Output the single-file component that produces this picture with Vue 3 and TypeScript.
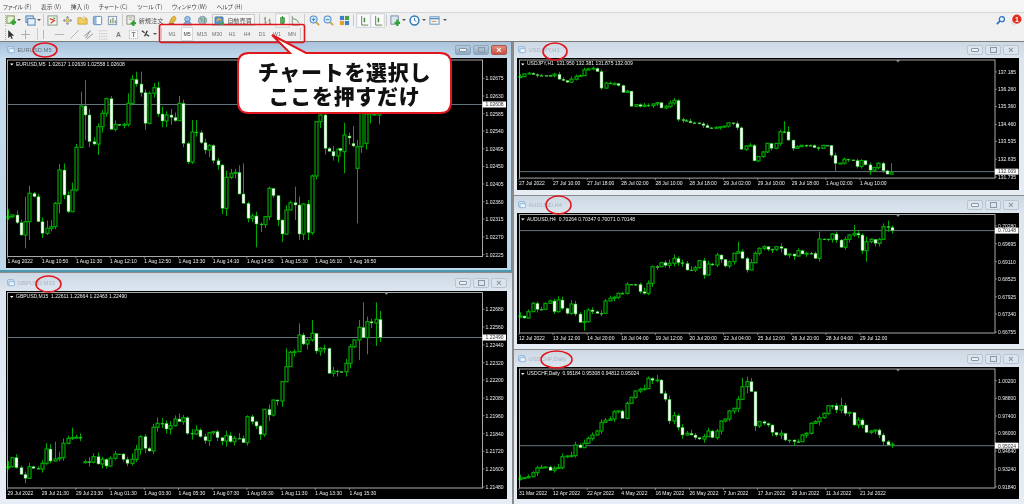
<template>
  <div class="terminal">
    <!-- menu -->
    <div class="menubar">
      <span v-for="m in menus" :key="m">{{ m }}</span>
    </div>

    <!-- toolbars -->
    <div v-for="(row, r) in toolbars" :key="r" class="toolbar">
      <template v-for="(c, n) in row" :key="n">
        <span v-if="c.i === 'spacer'" class="spacer"></span>
        <span v-else-if="c.i === 'grip'" class="cell grip" :style="{ width: c.w + 'px' }"></span>
        <span v-else-if="c.i === 'sep'" class="cell" :style="{ width: c.w + 'px' }"><i class="sep"></i></span>
        <span v-else-if="c.i === 'drop'" class="cell" :style="{ width: c.w + 'px' }"><i class="drop"></i></span>
        <span v-else-if="c.tf" class="cell tf" :class="{ on: c.on }" :style="{ width: c.w + 'px' }"><b>{{ c.tf }}</b></span>
        <span v-else class="cell" :class="{ on: c.on, auto: c.i === 'auto' }" :style="{ width: c.w + 'px' }">
          <svg class="ico" viewBox="0 0 12 12" v-html="icons[c.i]"></svg>
          <em v-if="c.text">{{ c.text }}</em>
        </span>
      </template>
    </div>

    <!-- chart windows -->
    <div class="mdi">
      <div v-for="(col, ci) in columns" :key="ci" class="col" :class="ci === 0 ? 'col-left' : 'col-right'">
        <section v-for="w in col" :key="w.title" class="win" :class="[w.cls, { active: w.active }]">
          <header class="title">
            <svg class="win-ico" viewBox="0 0 12 12">
              <rect x="1" y="1" width="9" height="8" rx="1" fill="#d8e8f6" stroke="#6f9fd0" />
              <rect x="3" y="4" width="8" height="6" rx="1" fill="#eef5fb" stroke="#6f9fd0" />
            </svg>
            <span class="name">{{ w.title }}</span>
            <span class="btns">
              <i class="btn"><u class="min"></u></i>
              <i class="btn"><u class="res"></u></i>
              <i class="btn close"><u class="x">×</u></i>
            </span>
          </header>
          <div class="chart">
            <svg :viewBox="w.vb.join(' ')" preserveAspectRatio="none">
              <line :x1="w.frame[0]" :x2="w.frame[2]" :y1="w.last[1]" :y2="w.last[1]" class="cur" />
              <g v-for="(c, k) in w.candles" :key="k">
                <line :x1="c.x" :x2="c.x" :y1="c.hi" :y2="c.lo" class="wick" />
                <rect :x="c.x - 1.5" :y="c.top" width="3" :height="c.h" :class="c.up ? 'up' : 'down'" />
              </g>
              <rect
                :x="w.frame[0]"
                :y="w.frame[1]"
                :width="w.frame[2] - w.frame[0]"
                :height="w.frame[3] - w.frame[1]"
                class="frame"
              />
              <polygon :points="`${w.mark - 2},${w.frame[1]} ${w.mark + 2},${w.frame[1]} ${w.mark},${w.frame[1] + 2.5}`" fill="#8a97a3" />
              <polygon :points="`${w.head[0] - 6},${w.head[1] - 2} ${w.head[0] - 2.5},${w.head[1] - 2} ${w.head[0] - 4.2},${w.head[1]}`" fill="#fff" />
              <text :x="w.head[0]" :y="w.head[1]" class="lbl">{{ w.info }}</text>
              <g v-for="p in w.prices" :key="p[0]">
                <line :x1="w.frame[2]" :x2="w.frame[2] + 2" :y1="p[1]" :y2="p[1]" class="tick" />
                <text :x="w.frame[2] + 3" :y="Number(p[1]) + 1.8" class="lbl">{{ p[0] }}</text>
              </g>
              <g v-for="t in w.times" :key="t[0]">
                <line :x1="t[1]" :x2="t[1]" :y1="w.frame[3]" :y2="w.frame[3] + 2" class="tick" />
                <text :x="t[1]" :y="w.frame[3] + 6.8" class="lbl">{{ t[0] }}</text>
              </g>
              <rect :x="w.frame[2]" :y="Number(w.last[1]) - 3" width="23.5" height="6" fill="#fff" />
              <text :x="w.frame[2] + 3" :y="Number(w.last[1]) + 1.8" class="lbl dark">{{ w.last[0] }}</text>
            </svg>
          </div>
        </section>
      </div>
    </div>

    <!-- annotations drawn over the screenshot -->
    <svg class="notes" viewBox="0 0 1024 504">
      <rect x="159.5" y="24.5" width="145" height="18" rx="2" class="mark" />
      <ellipse cx="45" cy="50" rx="12" ry="7" class="mark" />
      <ellipse cx="48.5" cy="284" rx="12.5" ry="8" class="mark" />
      <ellipse cx="555" cy="51.5" rx="12" ry="8.5" class="mark" />
      <ellipse cx="558.5" cy="205" rx="12.5" ry="9" class="mark" />
      <ellipse cx="556.5" cy="359.5" rx="15.5" ry="8.5" class="mark" />
      <path
        d="M249 53 H290 L272 35 L306 53 H440 Q451 53 451 64 V102 Q451 113 440 113 H249 Q238 113 238 102 V64 Q238 53 249 53 Z"
        class="bubble"
      />
    </svg>
    <div class="say">チャートを選択し<br />ここを押すだけ</div>
  </div>
</template>

<script setup lang="ts">
type Body = number | [number, number]
type Seg = { x0: number; ox: number; oy: number; v: Body[]; w?: Record<number, [number, number]>; gap?: boolean }
type Tool = { i: string; w: number; on?: boolean; text?: string; tf?: string }

const menus = ['ファイル (F)', '表示 (V)', '挿入 (I)', 'チャート (C)', 'ツール (T)', 'ウィンドウ (W)', 'ヘルプ (H)']

const icons: Record<string, string> = {
  newchart: '<rect x="1" y="1" width="8" height="8" fill="#e8f0d8" stroke="#6f8f50"/><path d="M8 5v6M5 8h6" stroke="#2fa52f" stroke-width="2.4"/>',
  profile: '<rect x="1" y="1" width="8" height="7" fill="#cfe0f2" stroke="#4a78ad"/><rect x="3" y="4" width="8" height="7" fill="#e6f0fa" stroke="#4a78ad"/>',
  watch: '<rect x="1" y="1" width="10" height="10" fill="#f6f6f2" stroke="#7c9a7c"/><path d="M3 4l5 2-4 3" stroke="#d2452e" stroke-width="1.4" fill="none"/><path d="M7 3l2 1" stroke="#3ca03c" stroke-width="1.4"/>',
  nav: '<path d="M6 1l2 2H4zM6 11l2-2H4zM1 6l2-2v4zM11 6L9 4v4z" fill="#76808a"/><circle cx="6" cy="6" r="2.2" fill="#e9c85a" stroke="#8d8d8d" stroke-width=".6"/>',
  folder: '<path d="M1 3h4l1 1h5v6H1z" fill="#f3cf62" stroke="#b48e28" stroke-width=".7"/><path d="M7 1l1.2 1.6L10 3 8.6 4.2 9 6 7 5 5.5 6" fill="#f6dd8a" stroke="#c5a23a" stroke-width=".5"/>',
  term: '<rect x="1.5" y="1.5" width="9" height="9" rx="1" fill="#fff" stroke="#4f7fb5"/><rect x="2" y="2" width="3" height="8" fill="#8db5dc"/>',
  tester: '<rect x="1.5" y="1.5" width="9" height="9" fill="#eef2f6" stroke="#7e97ad"/><path d="M4 9V5M6.5 9V3M9 9V6" stroke="#7d8a5c" stroke-width="1.2"/>',
  order: '<rect x="1" y="1" width="8" height="9" fill="#f4f4ee" stroke="#8a8a80"/><path d="M3 3h4M3 5h4" stroke="#999" stroke-width=".8"/><path d="M8 6v6M5 9h6" stroke="#22a52a" stroke-width="2.2"/>',
  editor: '<path d="M2 10L5 3l3-2 2 3-2 3z" fill="#e7b93e" stroke="#a67e1e" stroke-width=".7"/><path d="M2 10l6-1" stroke="#7c5e18"/>',
  mail: '<circle cx="6" cy="4.5" r="3" fill="#9dc4ea" stroke="#3f76b0" stroke-width=".8"/><path d="M1.5 11c.5-3 2.5-4 4.500-4s4 1 4.500 4z" fill="#7fa9d6" stroke="#3f76b0" stroke-width=".6"/>',
  net: '<circle cx="6" cy="6" r="4.600" fill="#a8bdcf" stroke="#6d8397" stroke-width=".7"/><path d="M3 4c2-1 3 1 2 3M8 3c1 2 0 5-1 6" stroke="#5aa05a" stroke-width="1.100" fill="none"/>',
  auto: '<rect x="1" y="2" width="9" height="8" rx="1" fill="#5b93c8" stroke="#355f8e" stroke-width=".6"/><path d="M3 7l2-3 3 2" stroke="#f0b93c" stroke-width="1.600" fill="none"/><circle cx="9" cy="9" r="2" fill="#4aa84a"/>',
  bars: '<path d="M3.500 2v8M2 4h1.500M3.500 8H5M8.500 4v7M7 6h1.500M8.500 9H10" stroke="#6a7a58" stroke-width=".9"/>',
  candle: '<path d="M6 1v10" stroke="#2e8b2e"/><rect x="4" y="3" width="4" height="6" fill="#4cb04c" stroke="#1f6f1f" stroke-width=".6"/>',
  linec: '<path d="M2.500 1v10h8" stroke="#7c8a70" fill="none"/><path d="M3 4l4 1 3 4" stroke="#5d8f5d" fill="none"/>',
  zin: '<circle cx="5" cy="5" r="3.800" fill="#d9ecfa" stroke="#4c8fc6" stroke-width="1.100"/><path d="M8 8l3 3" stroke="#d0a035" stroke-width="1.800"/><path d="M3 5h4M5 3v4" stroke="#3d7db3"/>',
  zout: '<circle cx="5" cy="5" r="3.800" fill="#d9ecfa" stroke="#4c8fc6" stroke-width="1.100"/><path d="M8 8l3 3" stroke="#d0a035" stroke-width="1.800"/><path d="M3 5h4" stroke="#3d7db3"/>',
  tile: '<rect x="1" y="1" width="4.500" height="4.500" fill="#3d7fc0"/><rect x="6.500" y="1" width="4.500" height="4.500" fill="#4aa04a"/><rect x="1" y="6.500" width="4.500" height="4.500" fill="#e0a030"/><rect x="6.500" y="6.500" width="4.500" height="4.500" fill="#3d7fc0"/>',
  shift: '<path d="M4 1v10h7" stroke="#5e7a4e" fill="none"/><path d="M7 3v5" stroke="#3e8e3e" stroke-width="1.600"/>',
  indic: '<rect x="1" y="1" width="8" height="9" fill="#dde7ef" stroke="#6f8aa3"/><path d="M8 5v7M5 8.500h6" stroke="#2fa52f" stroke-width="2.400"/>',
  clock: '<circle cx="6" cy="6" r="4.800" fill="#fff" stroke="#2f78b8" stroke-width="1.600"/><path d="M6 3v3l2 1" stroke="#2f78b8" fill="none"/>',
  tpl: '<rect x="1" y="2" width="10" height="8" fill="#eef4fa" stroke="#5d8fbd"/><path d="M1 4h10" stroke="#5d8fbd" stroke-width="1.400"/><path d="M3 7h5" stroke="#e09030"/>',
  cursor: '<path d="M3.500 1v9l2.200-2 1.500 3 1.300-.6-1.500-3h3z" fill="#333"/>',
  cross: '<path d="M6 1v10M1 6h10" stroke="#a4a8ac"/>',
  vline: '<path d="M6 1v10" stroke="#b0b0b0"/>',
  hline: '<path d="M1 6h10" stroke="#b0b0b0"/>',
  trend: '<path d="M1.500 10.500l9-9" stroke="#b0b0b0"/>',
  chan: '<path d="M1 8l7-6M4 11l7-6M3 10l5-8" stroke="#8f8f8f"/>',
  fib: '<path d="M1 2h10M1 5h10M1 8h10M1 11h10" stroke="#b4b4b4" stroke-dasharray="1 1"/>',
  letter: '<text x="6" y="9" text-anchor="middle" font-family="Liberation Sans" font-size="7.500" font-weight="700" fill="#777">A</text>',
  tbox: '<rect x="1.500" y="1.500" width="9" height="9" fill="#fafafa" stroke="#aaa" stroke-dasharray="1 1"/><text x="6" y="9" text-anchor="middle" font-family="Liberation Sans" font-size="7.500" font-weight="700" fill="#777">T</text>',
  tool: '<path d="M2 2l3 2M7 6l3 2M8 2l-3 6" stroke="#333" stroke-width="1.400"/>',
  search: '<circle cx="7.500" cy="4.500" r="2.800" fill="#e8f2fb" stroke="#2f6fc0" stroke-width="1.300"/><path d="M5.500 6.500L2 10" stroke="#2f6fc0" stroke-width="1.800"/>',
  bell: '<path d="M1 8c0-2 2-3 4-3s4 1 4 3-2 3-4 3l-3 1 1-2C2 10 1 9 1 8z" fill="#dedede"/><circle cx="7.500" cy="4.500" r="5" fill="#e22a1f"/><text x="7.500" y="7.200" text-anchor="middle" font-family="Liberation Sans" font-size="7.500" font-weight="700" fill="#fff">1</text>'
}

const t = (i: string, w: number, extra: Partial<Tool> = {}): Tool => ({ i, w, ...extra })

const frames = ['M1', 'M5', 'M15', 'M30', 'H1', 'H4', 'D1', 'W1', 'MN']

const toolbars: Tool[][] = [
  [
    t('grip', 4), t('newchart', 8), t('drop', 8), t('profile', 14), t('drop', 4), t('sep', 4),
    t('watch', 14), t('nav', 16), t('folder', 15), t('term', 15), t('tester', 15), t('sep', 4),
    t('order', 41, { text: '新規注文' }), t('editor', 15), t('mail', 15), t('net', 15),
    t('auto', 46, { text: '自動売買' }), t('sep', 6), t('bars', 10), t('candle', 20, { on: true }),
    t('linec', 7), t('sep', 10), t('zin', 10), t('zout', 18), t('tile', 14), t('sep', 4),
    t('shift', 16, { on: true }), t('shift', 12, { on: true }), t('sep', 6), t('indic', 12), t('drop', 6),
    t('clock', 15), t('drop', 4), t('tpl', 16), t('drop', 6), t('spacer', 0), t('search', 14), t('bell', 17)
  ],
  [
    t('grip', 4), t('cursor', 7), t('cross', 22), t('sep', 2), t('vline', 10), t('hline', 22), t('trend', 8),
    t('chan', 20), t('fib', 10), t('letter', 20), t('tbox', 10), t('tool', 14), t('drop', 6), t('sep', 6.5),
    ...frames.map((f) => t('tf', 15, { tf: f, on: f === 'M5' })),
    t('sep', 2)
  ]
]

const rnd = (n: number) => {
  const s = Math.sin(n * 12.9898) * 43758.5453
  return s - Math.floor(s)
}

// values are read from 3x crops, so each segment says where its crop began
const candles = (segs: Seg[], wk: number) => {
  const out: { x: number; hi: number; lo: number; top: number; h: number; up: boolean }[] = []
  let prev: number | null = null
  let n = 0
  segs.forEach((s) => {
    if (s.gap) prev = null
    s.v.forEach((b, i) => {
      const open = Array.isArray(b) ? s.oy + b[0] / 3 : prev ?? s.oy + b / 3 + 1
      const close = Array.isArray(b) ? s.oy + b[1] / 3 : s.oy + b / 3
      const top = Math.min(open, close)
      const bot = Math.max(open, close)
      const long = s.w?.[i]
      n++
      out.push({
        x: Math.round(s.ox + (s.x0 + i * 12.84) / 3) + 0.5,
        hi: long ? s.oy + long[0] / 3 : top - rnd(n) * wk,
        lo: long ? s.oy + long[1] / 3 : bot + rnd(n + 57) * wk,
        top,
        h: Math.max(bot - top, 0.8),
        up: close < open
      })
      prev = close
    })
  })
  return out
}

const eur: Seg[] = [
  {
    x0: 24, ox: 0, oy: 40,
    v: [530, 525, 548, 585, 545, 460, 470, 545, 580, 565, 560, 490, 390, 465, 515, 450, 322, 198, 225, 305, 312, 260, 220, 176, 268, 253, 256, 253, 190, 118, 132, 158, 250, 160, 143, 222, 243, 225, 232, 242, 190, 310, 366, 276, 278, 308, 330, 316, 362, 375, 505, 412, 400, 397, 462, 490, 535, 528, 552, 554, 530, 445, 467, 540, 582, 510, 488, 495, 582, 492, 578, 408, 245, 225, 325, 334, 348, 328],
    w: { 4: [470, 625], 5: [437, 600], 12: [372, 520], 17: [155, 322], 18: [120, 300], 21: [250, 345], 28: [160, 260], 29: [105, 195], 30: [95, 140], 31: [95, 170], 35: [125, 230], 43: [240, 372], 44: [240, 290], 58: [515, 622], 55: [370, 470], 61: [440, 540], 67: [440, 540], 68: [470, 600], 69: [490, 600] }
  },
  {
    x0: 0, ox: 340, oy: 40, gap: true,
    v: [[325, 332], [335, 285], [288, 294], [310, 318], [385, 320], [320, 200], [310, 222], [222, 215], [225, 222], [225, 215]],
    w: { 1: [248, 400], 3: [258, 322], 4: [300, 550], 9: [200, 253], 7: [200, 250] }
  }
]

const jpy: Seg[] = [
  {
    x0: 540, ox: 340, oy: 40,
    v: [110, 102, 100, 104, 107, 107, 107, 108, 103, 118, 122, 127, 118, 110, 107, 90, 87, 85, 95, 145, 130, 132, 131, 137, 158, 154, 200, 195, 200, 197, 198, 193, 189, 205, 200, 190, 182, 240, 243]
  },
  {
    x0: 5, ox: 684, oy: 0,
    v: [365, 370, 370, 373, 378, 385, 385, 384, 382, 380, 370, 372, 385, 450, 440, 438, 485, 472, 458, 432, 447, 432, 397, 397, 422, 447, 442, 438, 438, 438, 445, 447, 438, 438, 468, 493, 492, 480, 482, 484, 502, 484, 497, 513, 505, 492, 515, 525, 519],
    w: { 23: [365, 400], 24: [380, 425], 48: [492, 525], 35: [460, 517], 43: [490, 528] }
  }
]

const aud: Seg[] = [
  {
    x0: 29, ox: 510, oy: 190,
    v: [378, 384, 365, 340, 358, 358, 340, 333, 365, 330, 355, 370, 342, 372, 397, 395, 360, 365, 370, 370, 333, 325, 322, 310, 310, 283, 283, 283, 305, 310, 280, 230, 230, 218, 226, 220, 205, 218, 220, 240, 240, 233, 212, 255, 222, 225, 195, 208, 228, 215, 190, 185, 205, 240, 218, 190, 175, 170, 178, 178, 170, 175, 195, 192, 198, 182, 192, 190, 190, 205, 147, 147, 148, 132, 150, 172, 148, 135, 130, 135, 182, 155, 148, 160, 148, 110, 112, 122],
    w: { 15: [360, 422], 51: [155, 190], 70: [125, 215], 81: [140, 215], 85: [100, 150], 78: [105, 140], 86: [92, 125] }
  }
]

const chf: Seg[] = [
  {
    x0: 29, ox: 510, oy: 345,
    v: [400, 398, 395, 383, 368, 367, 366, 376, 370, 368, 335, 333, 332, 300, 308, 295, 280, 270, 258, 232, 226, 222, 200, 198, 220, 175, 157, 138, 133, 131, 100, 106, 105, 145, 163, 228, 212, 247, 270, 265, 270, 278, 282, 275, 258, 278, 258, 228, 222, 198, 190, 163, 125, 110, 140, 243, 230, 235, 240, 262, 270, 265, 285, 285, 290, 290, 270, 265, 235, 230, 218, 205, 182, 182, 195, 182, 205, 202, 240, 225, 240, 262, 258, 255, 270, 290, 300, 298],
    w: { 30: [95, 120], 32: [90, 112], 52: [98, 165], 53: [95, 145], 55: [140, 258], 75: [158, 205] }
  }
]

const gbp: Seg[] = [
  {
    x0: 23, ox: 0, oy: 265,
    v: [605, 578, 608, 628, 640, 605, 610, 612, 595, 552, 588, 582, 578, 535, 520, 518, 517, 518],
    w: { 15: [488, 525], 11: [530, 590] }
  },
  {
    x0: 254, ox: 0, oy: 265, gap: true,
    v: [590, 592, 575, 597, 583, 603, 580, 567, 567, 583, 595, 583, 553, 515, 550, 558, 487, 475, 475, 492, 482, 462, 470, 458, 505, 507, 495, 515, 527, 503, 500, 518, 528, 512, 530, 520, 520, 533, 455, 470, 483, 508, 433, 450, 405, 408, 350, 305, 262, 260, 210, 237, 225, 205, 258, 250, 250, 325, 318, 320, 320, 295, 245, 225, 187, 218, 170, 174, 163, 217],
    w: { 64: [165, 285], 65: [112, 220], 66: [155, 268], 68: [112, 243], 69: [138, 232], 50: [175, 260], 53: [165, 230], 47: [250, 320] }
  }
]

const axis = (labels: string[], start: number, step: number) => labels.map((l, i) => [l, start + i * step] as [string, number])

const columns = [
  [
    {
      title: 'EURUSD,M5', cls: 'w-top', active: true, vb: [6, 58, 501, 210], frame: [7.5, 60, 482.5, 256.5], mark: 386,
      head: [16, 65.5], info: 'EURUSD,M5  1.02617 1.02639 1.02558 1.02608', last: ['1.02608', 104.5],
      prices: [['1.02675', 78.3], ['1.02630', 96], ['1.02540', 131], ['1.02495', 148.7], ['1.02450', 166.5], ['1.02405', 184], ['1.02360', 201.7], ['1.02315', 219], ['1.02270', 237], ['1.02225', 254.7], ['1.02585', 113.7]],
      times: axis(['1 Aug 2022', '1 Aug 10:50', '1 Aug 11:30', '1 Aug 12:10', '1 Aug 12:50', '1 Aug 13:30', '1 Aug 14:10', '1 Aug 14:50', '1 Aug 15:30', '1 Aug 16:10', '1 Aug 16:50'], 7.5, 34.2),
      candles: candles(eur, 8)
    },
    {
      title: 'GBPUSD,M15', cls: 'w-low', active: false, vb: [6, 291, 501, 208], frame: [7.5, 292.5, 482.5, 488], mark: 386.5,
      head: [16, 298], info: 'GBPUSD,M15  1.22611 1.22664 1.22463 1.22490', last: ['1.22490', 337.5],
      prices: [['1.22680', 309.3], ['1.22560', 327], ['1.22440', 345], ['1.22320', 362.7], ['1.22200', 380], ['1.22080', 398], ['1.21960', 415.7], ['1.21840', 433.7], ['1.21720', 451.3], ['1.21600', 469], ['1.21480', 487]],
      times: axis(['29 Jul 2022', '29 Jul 21:30', '29 Jul 23:30', '1 Aug 01:30', '1 Aug 03:30', '1 Aug 05:30', '1 Aug 07:30', '1 Aug 09:30', '1 Aug 11:30', '1 Aug 13:30', '1 Aug 15:30'], 7.5, 34.2),
      candles: candles(gbp, 6)
    }
  ],
  [
    {
      title: 'USDJPY,H1', cls: 'w-top', active: false, vb: [517, 58, 502, 133], frame: [519.5, 60, 995, 179], mark: 898,
      head: [527, 65.5], info: 'USDJPY,H1  131.950 132.381 131.875 132.009', last: ['132.009', 172.5],
      prices: [['137.185', 72], ['136.260', 89.5], ['135.360', 107], ['134.460', 125], ['133.535', 142], ['132.635', 160], ['131.735', 178]],
      times: axis(['27 Jul 2022', '27 Jul 10:00', '27 Jul 18:00', '28 Jul 02:00', '28 Jul 10:00', '28 Jul 18:00', '29 Jul 02:00', '29 Jul 10:00', '29 Jul 18:00', '1 Aug 02:00', '1 Aug 10:00'], 519, 34.1),
      candles: candles(jpy, 2.5)
    },
    {
      title: 'AUDUSD,H4', cls: 'w-mid', active: false, vb: [517, 213, 502, 131], frame: [519.5, 214.5, 995, 333], mark: 898,
      head: [527, 220.5], info: 'AUDUSD,H4  0.70264 0.70347 0.70071 0.70148', last: ['0.70148', 230.6],
      prices: [['0.70280', 225.7], ['0.69695', 243.7], ['0.69110', 261.7], ['0.68525', 279], ['0.67925', 296.7], ['0.67340', 314], ['0.66755', 332]],
      times: axis(['12 Jul 2022', '13 Jul 12:00', '14 Jul 20:00', '18 Jul 04:00', '19 Jul 12:00', '20 Jul 20:00', '22 Jul 04:00', '25 Jul 12:00', '26 Jul 20:00', '28 Jul 04:00', '29 Jul 12:00'], 519, 34.1),
      candles: candles(aud, 4)
    },
    {
      title: 'USDCHF,Daily', cls: 'w-end', active: false, vb: [517, 367, 502, 132], frame: [519.5, 369, 995, 488], mark: 898,
      head: [527, 375], info: 'USDCHF,Daily  0.95184 0.95308 0.94812 0.95024', last: ['0.95024', 445.7],
      prices: [['1.00200', 380.7], ['0.98800', 398.3], ['0.97400', 416], ['0.96000', 433.3], ['0.94640', 451], ['0.93240', 469], ['0.91840', 486.7]],
      times: axis(['31 Mar 2022', '12 Apr 2022', '22 Apr 2022', '4 May 2022', '16 May 2022', '26 May 2022', '7 Jun 2022', '17 Jun 2022', '29 Jun 2022', '11 Jul 2022', '21 Jul 2022'], 519, 34.1),
      candles: candles(chf, 4)
    }
  ]
]
</script>

<style scoped>
.terminal {
  position: relative;
  width: 1024px;
  height: 504px;
  overflow: hidden;
  display: flex;
  flex-direction: column;
  background: #f0f0f0;
  font-family: "Liberation Sans", "Noto Sans CJK JP", sans-serif;
  filter: blur(0.35px);
}

.menubar {
  height: 12px;
  display: flex;
  align-items: center;
  gap: 9.5px;
  padding-left: 3px;
  background: #f5f5f5;
  border-bottom: 1px solid #d6d6d6;
  font: 5.8px "Noto Sans CJK JP", sans-serif;
  font-feature-settings: "palt";
  color: #444;
}

.toolbar {
  height: 14px;
  display: flex;
  align-items: center;
  padding-left: 3px;
  padding-right: 0;
}

.spacer {
  flex: 1;
}

.cell {
  height: 14px;
  flex: none;
  display: flex;
  align-items: center;
  justify-content: center;
  gap: 2px;
}

.cell em {
  font: normal 6.2px "Noto Sans CJK JP", sans-serif;
  color: #555;
  white-space: nowrap;
}

.ico {
  width: 11px;
  height: 11px;
  flex: none;
  overflow: visible;
}

.grip {
  background: repeating-linear-gradient(#aaa 0 1px, transparent 1px 2px) center / 1px 11px no-repeat;
}

.sep {
  width: 1px;
  height: 12px;
  background: #c9c9c9;
}

.drop {
  border: 2px solid transparent;
  border-top: 2.5px solid #555;
  border-bottom: 0;
}

.on > .ico {
  outline: 1px solid #d3d9df;
  outline-offset: 1px;
  background: #fafafa;
}

.auto {
  position: relative;
}

.auto::after {
  content: "";
  position: absolute;
  inset: 1px 1px 1px 2px;
  border: 1px solid #c9c9c9;
  background: #f7f7f7;
  z-index: 0;
}

.auto > * {
  position: relative;
  z-index: 1;
}

.tf b {
  font: 5.2px "Liberation Sans", sans-serif;
  color: #707070;
}

.tf.on b {
  color: #444;
  background: #fbfbfb;
  outline: 1px solid #d4d8dc;
  padding: 3px 1.5px;
}

.mdi {
  flex: 1;
  display: grid;
  grid-template-columns: 512px 510px;
  gap: 2px;
  border-top: 1px solid #7c7c7c;
  background: #8a8a8a;
  min-height: 0;
}

.col {
  display: grid;
  gap: 1px;
  min-height: 0;
}

.col-left {
  grid-template-rows: 230px 231px;
}

.col-right {
  grid-template-rows: 153px 153px 154px;
}

.win {
  display: flex;
  flex-direction: column;
  min-height: 0;
  padding: 0 5px 5px 3px;
  background: linear-gradient(#cdd8e4 0, #dde6ef 18px, #e6edf4 100%);
}

.col-left .win {
  padding-left: 6px;
}

.win.active {
  padding-right: 4px;
  padding-bottom: 2px;
  border-right: 1px solid #4a98ad;
  border-bottom: 2px solid #4a98ad;
  background: linear-gradient(#a9c3dc 0, #c8dcee 18px, #bcd6ea 100%);
}

.w-low {
  padding-top: 2px;
}

.w-mid {
  padding-top: 1px;
}

.w-end {
  padding-top: 1px;
}

.title {
  height: 16px;
  flex: none;
  display: flex;
  align-items: center;
  gap: 2.5px;
}

.win-ico {
  width: 8px;
  height: 8px;
  margin-left: 1px;
}

.name {
  font-size: 5.8px;
  color: #aab4be;
}

.active .name {
  color: #64717d;
}

.btns {
  margin-left: auto;
  display: flex;
  gap: 2px;
}

.btn {
  width: 16px;
  height: 10px;
  display: flex;
  align-items: center;
  justify-content: center;
  border: 1px solid #b9c4cf;
  border-radius: 2px;
  background: #dbe4ec;
  box-sizing: border-box;
}

.active .btn {
  background: linear-gradient(#b6cadd, #8fa9c2);
  border-color: #8fa5ba;
}

.active .btn.close {
  background: linear-gradient(#e08a7c, #c9503f);
  border-color: #a8574c;
}

.btn u {
  text-decoration: none;
}

.min {
  width: 6px;
  height: 2px;
  border: 1px solid #8797a6;
  border-radius: 1px;
  background: #eef2f6;
}

.res {
  width: 5px;
  height: 4px;
  border: 1px solid #8797a6;
}

.x {
  font: 700 9px/8px "Liberation Sans", sans-serif;
  color: #8797a6;
}

.active .x {
  color: #fff;
}

.chart {
  flex: 1;
  min-height: 0;
  background: #000;
}

.chart svg {
  display: block;
  width: 100%;
  height: 100%;
}

.wick {
  stroke: #00a800;
  stroke-width: 1;
}

.up {
  fill: #000;
  stroke: #00a800;
  stroke-width: 1.2;
}

.down {
  fill: #fff;
  stroke: #00a800;
  stroke-width: 0.5;
}

.cur {
  stroke: #66747f;
  stroke-width: 1;
}

.frame {
  fill: none;
  stroke: #a9a9a9;
  stroke-width: 1;
}

.tick {
  stroke: #a9a9a9;
  stroke-width: 0.7;
}

.lbl {
  font: 5px "Liberation Sans", sans-serif;
  fill: #eee;
  white-space: pre;
}

.lbl.dark {
  fill: #333;
}

.notes {
  position: absolute;
  left: 0;
  top: 0;
  width: 1024px;
  height: 504px;
  pointer-events: none;
}

.mark {
  fill: none;
  stroke: #e2171d;
  stroke-width: 1.6;
}

.bubble {
  fill: #fff;
  stroke: #e2171d;
  stroke-width: 2;
}

.say {
  position: absolute;
  left: 238px;
  top: 59px;
  width: 213px;
  font: 900 21px/24px "Noto Sans CJK JP", sans-serif;
  letter-spacing: 0.7px;
  text-align: center;
  color: #111;
}
</style>
